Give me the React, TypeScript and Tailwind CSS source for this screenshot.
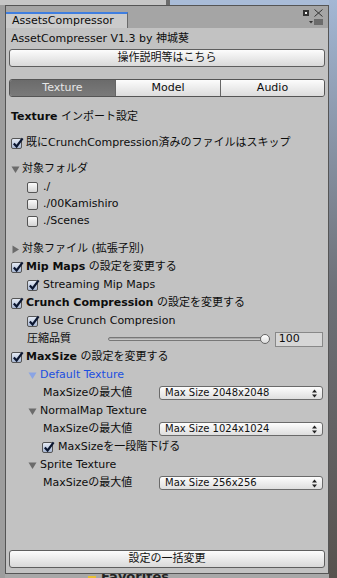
import React from 'react'

const font = { fontFamily: '"DejaVu Sans", "Noto Sans CJK JP", sans-serif' }

function Check({ checked }: { checked?: boolean }) {
  return (
    <span
      className={`relative shrink-0 w-[11px] h-[11px] rounded-[2px] border border-[#555] ${
        checked ? 'bg-gradient-to-b from-[#e4eaf4] to-[#a9b8d4]' : 'bg-gradient-to-b from-[#fbfbfb] to-[#d4d4d4]'
      }`}
    >
      {checked && (
        <svg className="absolute -top-[2px] left-[0px]" width="12" height="12" viewBox="0 0 12 12">
          <path d="M1.8 6.5 L4.6 9.5 L10.6 1.4" fill="none" stroke="#0b1630" strokeWidth="2.2" />
        </svg>
      )}
    </span>
  )
}

function Arrow({ open, color = '#6b6b6b' }: { open?: boolean; color?: string }) {
  return (
    <svg width="9" height="9" viewBox="0 0 9 9" className="shrink-0">
      {open ? <polygon points="0.5,1.5 8.5,1.5 4.5,8" fill={color} /> : <polygon points="1.5,0.5 8,4.5 1.5,8.5" fill={color} />}
    </svg>
  )
}

function Popup({ value }: { value: string }) {
  return (
    <div className="ml-auto w-[164px] h-[14px] rounded-[3px] border border-[#6a6a6a] bg-gradient-to-b from-[#fdfdfd] to-[#dedede] flex items-center pl-[5px] pr-[5px]">
      <span className="text-[10px] leading-none text-[#111]">{value}</span>
      <svg className="ml-auto" width="5" height="9" viewBox="0 0 5 9">
        <polygon points="0,3.5 5,3.5 2.5,0.5" fill="#222" />
        <polygon points="0,5.5 5,5.5 2.5,8.5" fill="#222" />
      </svg>
    </div>
  )
}

function Btn({ label }: { label: string }) {
  return (
    <div className="mx-[3px] h-[18px] rounded-[3px] border border-[#5e5e5e] bg-gradient-to-b from-[#fcfcfc] to-[#d9d9d9] flex items-center justify-center text-[11px] text-[#111]">
      {label}
    </div>
  )
}

function Row({ indent = 0, children, h = 18 }: { indent?: number; children: React.ReactNode; h?: number }) {
  return (
    <div className="flex items-center gap-[4px] pr-[5px]" style={{ paddingLeft: 5 + indent, height: h }}>
      {children}
    </div>
  )
}

export default function App() {
  return (
    <div className="w-[337px] h-[578px] overflow-hidden flex text-[11px] text-[#0d0d0d]" style={font}>
      <div className="w-[5px] flex flex-col bg-[#9d9d9d]">
        <div className="h-[5px] bg-[#c6c6c6]" />
      </div>

      <div className="w-[324px] flex flex-col">
        <div className="h-[5px] flex">
          <div className="w-[161px] bg-[#c6c6c6]" />
          <div className="w-[4px] bg-[#6c6c6c]" />
          <div className="flex-1 bg-[#a9bcd8]" />
        </div>

        <div className="h-[569px] border border-[#555] flex flex-col">
          <div className="h-[22px] bg-[#a5a5a5] flex items-end relative">
            <div className="w-[122px] h-[16px] bg-[#cbcbcb] border-t-2 border-[#3f7ee0] border-r border-r-[#6a6a6a] flex items-center pl-[6px] text-[11px]">
              AssetsCompressor
            </div>
            <div className="absolute right-[5px] top-[3px] flex flex-col items-end gap-[2px]">
              <div className="flex items-center gap-[5px]">
                <span className="w-[6px] h-[6px] bg-[#f0f0f0] border-[2px] border-[#333]" />
                <svg width="9" height="8" viewBox="0 0 9 8">
                  <path d="M0.5 0.5 L8.5 7.5 M8.5 0.5 L0.5 7.5" stroke="#333" strokeWidth="1" />
                </svg>
              </div>
              <svg width="14" height="6" viewBox="0 0 14 6">
                <polygon points="0,2 4,2 2,4.5" fill="#333" />
                <rect x="5" y="0.5" width="9" height="1" fill="#333" />
                <rect x="5" y="2.5" width="9" height="1" fill="#333" />
                <rect x="5" y="4.5" width="9" height="1" fill="#333" />
              </svg>
            </div>
          </div>

          <div className="flex-1 bg-[#c2c2c2] flex flex-col pt-[3px] pb-[5px]">
            <div className="h-[16px] flex items-center pl-[5px]">AssetCompresser V1.3 by 神城葵</div>
            <div className="mt-[2px]">
              <Btn label="操作説明等はこちら" />
            </div>

            <div className="mt-[12px] mx-[3px] h-[18px] rounded-[3px] border border-[#555] flex overflow-hidden">
              <div className="w-[105px] bg-gradient-to-b from-[#6b6b6b] to-[#7a7a7a] text-[#e6e6e6] flex items-center justify-center">Texture</div>
              <div className="w-[105px] border-l border-[#666] bg-gradient-to-b from-[#fcfcfc] to-[#dcdcdc] flex items-center justify-center">Model</div>
              <div className="flex-1 border-l border-[#666] bg-gradient-to-b from-[#fcfcfc] to-[#dcdcdc] flex items-center justify-center">Audio</div>
            </div>

            <div className="mt-[12px] h-[16px] flex items-center pl-[5px]">
              <b>Texture</b>&nbsp;インポート設定
            </div>
            <div className="mt-[10px]">
              <Row h={16}>
                <Check checked />
                <span>既にCrunchCompression済みのファイルはスキップ</span>
              </Row>
            </div>
            <div className="mt-[10px]">
              <Row h={16}>
                <Arrow open />
                <span className="-ml-[2px]">対象フォルダ</span>
              </Row>
            </div>
            <div className="mt-[2px]">
              <Row indent={16} h={17}>
                <Check />
                <span className="ml-[1px]">./</span>
              </Row>
              <Row indent={16} h={17}>
                <Check />
                <span className="ml-[1px]">./00Kamishiro</span>
              </Row>
              <Row indent={16} h={17}>
                <Check />
                <span className="ml-[1px]">./Scenes</span>
              </Row>
            </div>
            <div className="mt-[11px]">
              <Row h={16}>
                <Arrow />
                <span className="-ml-[2px]">対象ファイル (拡張子別)</span>
              </Row>
            </div>

            <div className="mt-[1px]">
              <Row>
                <Check checked />
                <span>
                  <b>Mip Maps</b> の設定を変更する
                </span>
              </Row>
              <Row indent={16}>
                <Check checked />
                <span className="ml-[1px]">Streaming Mip Maps</span>
              </Row>
              <Row>
                <Check checked />
                <span>
                  <b>Crunch Compression</b> の設定を変更する
                </span>
              </Row>
              <Row indent={16}>
                <Check checked />
                <span className="ml-[1px]">Use Crunch Compresion</span>
              </Row>
              <Row indent={16}>
                <span className="w-[78px]">圧縮品質</span>
                <div className="w-[166px] h-[10px] flex items-center relative">
                  <div className="w-[157px] h-[4px] rounded-full border border-[#777] bg-gradient-to-b from-[#9a9a9a] to-[#d8d8d8]" />
                  <span className="absolute left-[152px] top-0 w-[10px] h-[10px] rounded-full border border-[#666] bg-gradient-to-b from-[#ffffff] to-[#dcdcdc]" />
                </div>
                <div className="ml-auto w-[49px] h-[15px] border border-[#888] bg-[#d6d6d6] flex items-center pl-[3px]">100</div>
              </Row>
              <Row>
                <Check checked />
                <span>
                  <b>MaxSize</b> の設定を変更する
                </span>
              </Row>
              <Row indent={17}>
                <Arrow open color="#8aa4e4" />
                <span className="-ml-[1px] text-[#1c4fe0]">Default Texture</span>
              </Row>
              <Row indent={32}>
                <span>MaxSizeの最大値</span>
                <Popup value="Max Size 2048x2048" />
              </Row>
              <Row indent={17}>
                <Arrow open />
                <span className="-ml-[1px]">NormalMap Texture</span>
              </Row>
              <Row indent={32}>
                <span>MaxSizeの最大値</span>
                <Popup value="Max Size 1024x1024" />
              </Row>
              <Row indent={31}>
                <Check checked />
                <span className="ml-[1px]">MaxSizeを一段階下げる</span>
              </Row>
              <Row indent={17}>
                <Arrow open />
                <span className="-ml-[1px]">Sprite Texture</span>
              </Row>
              <Row indent={32}>
                <span>MaxSizeの最大値</span>
                <Popup value="Max Size 256x256" />
              </Row>
            </div>

            <div className="mt-auto">
              <Btn label="設定の一括変更" />
            </div>
          </div>
        </div>

        <div className="flex-1 bg-[#a8a8a8] flex items-start pl-[83px] overflow-hidden">
          <span className="w-[8px] h-[6px] mt-[2px] bg-[#e8c030]" />
          <span className="ml-[5px] -mt-[4px] text-[13px] font-bold leading-none text-[#222]">Favorites</span>
        </div>
      </div>

      <div className="flex-1 bg-gradient-to-b from-[#a3b7d4] via-[#6e7178] to-[#57524e]" />
    </div>
  )
}
